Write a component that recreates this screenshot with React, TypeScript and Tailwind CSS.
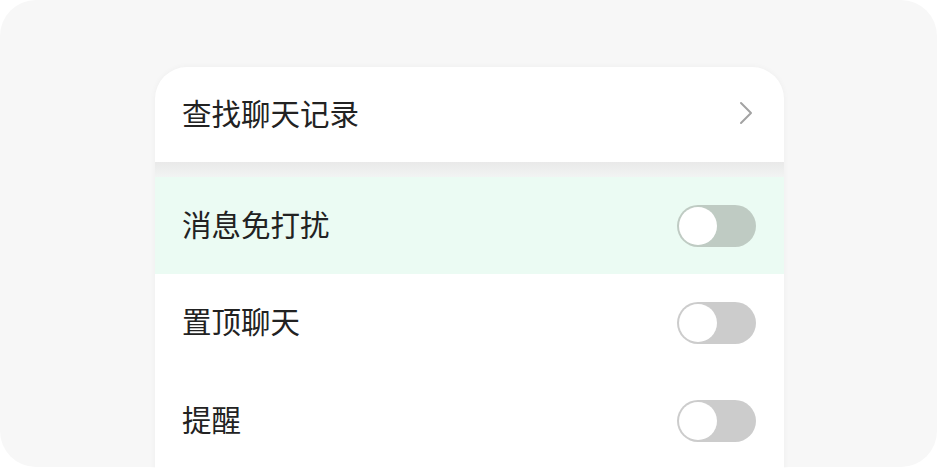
import React from 'react';

const Toggle: React.FC<{ track: string }> = ({ track }) => (
  <div className={`relative h-[42px] w-[79px] rounded-full ${track}`}>
    <div className="absolute left-[2px] top-[2px] h-[38px] w-[38px] rounded-full bg-white" />
  </div>
);

const Row: React.FC<{ label: string; className?: string; children: React.ReactNode }> = ({ label, className = '', children }) => (
  <div className={`flex items-center justify-between pl-[27px] pr-[28px] ${className}`}>
    <span className="mb-[4px] text-[29.5px] leading-none text-[#222]">{label}</span>
    {children}
  </div>
);

export default function App() {
  return (
    <div
      className="h-[468px] w-[937px] overflow-hidden bg-white"
      style={{ fontFamily: '"Noto Sans CJK SC", "Noto Sans", sans-serif' }}
    >
      <div className="flex h-[467px] justify-center rounded-[36px] bg-[#f7f7f7] pl-[2px] pt-[67px]">
        <div className="flex h-[420px] w-[629px] flex-col overflow-hidden rounded-t-[32px] bg-white shadow-[0_0_6px_rgba(0,0,0,0.04)]">
          {/* search history */}
          <Row label="查找聊天记录" className="h-[95px] pr-[31px]">
            <svg className="mb-[3px]" width="14" height="24" viewBox="0 0 14 24" fill="none">
              <path d="M2 2 L12 12 L2 22" stroke="#a3a3a3" strokeWidth="2" strokeLinecap="round" strokeLinejoin="round" />
            </svg>
          </Row>

          <div className="h-[15px] bg-gradient-to-b from-[#e9e9e9] to-[#f2f4f3]" />

          <Row label="消息免打扰" className="h-[97px] bg-[#ebfbf3]">
            <Toggle track="bg-[#bfcbc3]" />
          </Row>
          <Row label="置顶聊天" className="h-[98px]">
            <Toggle track="bg-[#cccccc]" />
          </Row>
          <Row label="提醒" className="h-[98px]">
            <Toggle track="bg-[#cccccc]" />
          </Row>
        </div>
      </div>
    </div>
  );
}
